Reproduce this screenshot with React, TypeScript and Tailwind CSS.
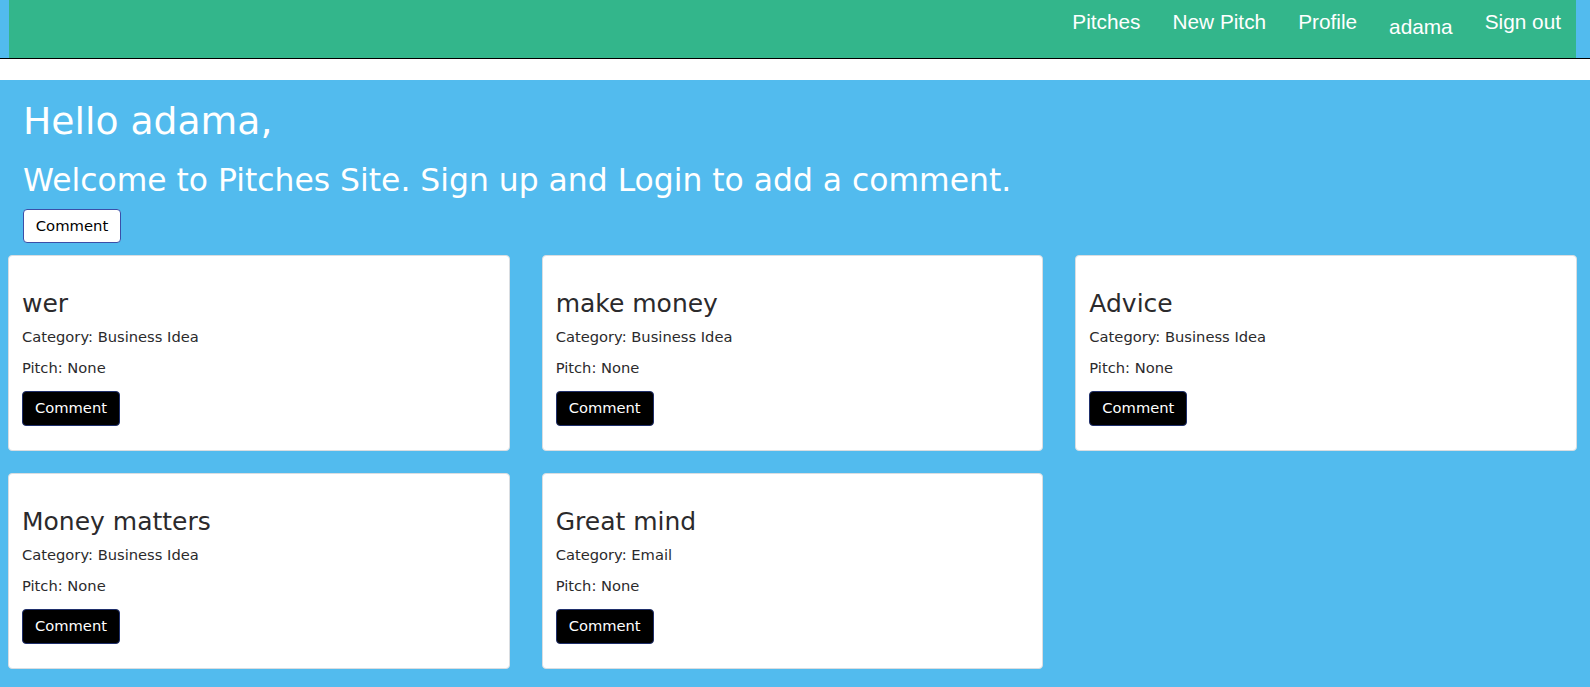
import React from "react";

const cards = [
  { title: "wer", category: "Business Idea" },
  { title: "make money", category: "Business Idea" },
  { title: "Advice", category: "Business Idea" },
  { title: "Money matters", category: "Business Idea" },
  { title: "Great mind", category: "Email" },
];

function Card({ title, category }: { title: string; category: string }) {
  return (
    <div className="h-[196px] rounded-[4px] border border-[#d9dde1] bg-white pl-[13px] pt-[33px] text-[#2b2a2c]">
      <h3 className="text-[25px] leading-[30px]">{title}</h3>
      <p className="mt-[7px] text-[14.7px] leading-[22px]">Category: {category}</p>
      <p className="mt-[9px] text-[14.7px] leading-[22px]">Pitch: None</p>
      <button className="mt-[12px] flex h-[35px] w-[98px] items-center justify-center rounded-[4px] border border-[#1f2f6b] bg-black text-[14.7px] text-white">
        Comment
      </button>
    </div>
  );
}

export default function App() {
  return (
    <div
      className="flex min-h-screen flex-col bg-white"
      style={{ fontFamily: '"DejaVu Sans", sans-serif' }}
    >
      <div className="h-[58px] bg-[#52bbee] pl-[9px] pr-[14px]">
        <nav
          className="flex h-full items-start justify-end gap-[32px] bg-[#33b68b] pr-[15px] pt-[10px] text-[20.8px] leading-[23px] text-white"
          style={{ fontFamily: '"Liberation Sans", Arial, sans-serif' }}
        >
          <a>Pitches</a>
          <a>New Pitch</a>
          <a>Profile</a>
          <span className="pt-[5px]">adama</span>
          <a>Sign out</a>
        </nav>
      </div>
      <div className="h-px bg-black" />
      <div className="h-[21px] bg-white" />
      <main className="flex-1 bg-[#52bbee] pb-[18px] pt-[18px]">
        <div className="px-[23px] text-white">
          <h1 className="text-[37.7px] leading-[47px]">Hello adama,</h1>
          <h2 className="mt-[17px] text-[31.4px] leading-[37px]">
            Welcome to Pitches Site. Sign up and Login to add a comment.
          </h2>
          <button className="mt-[10px] flex h-[34px] w-[98px] items-center justify-center rounded-[4px] border border-[#3b4fa8] bg-white text-[14.8px] text-black">
            Comment
          </button>
        </div>
        <div className="mt-[12px] grid grid-cols-3 gap-x-[32px] gap-y-[22px] pl-[8px] pr-[13px]">
          {cards.map((c) => (
            <Card key={c.title} title={c.title} category={c.category} />
          ))}
        </div>
      </main>
    </div>
  );
}
